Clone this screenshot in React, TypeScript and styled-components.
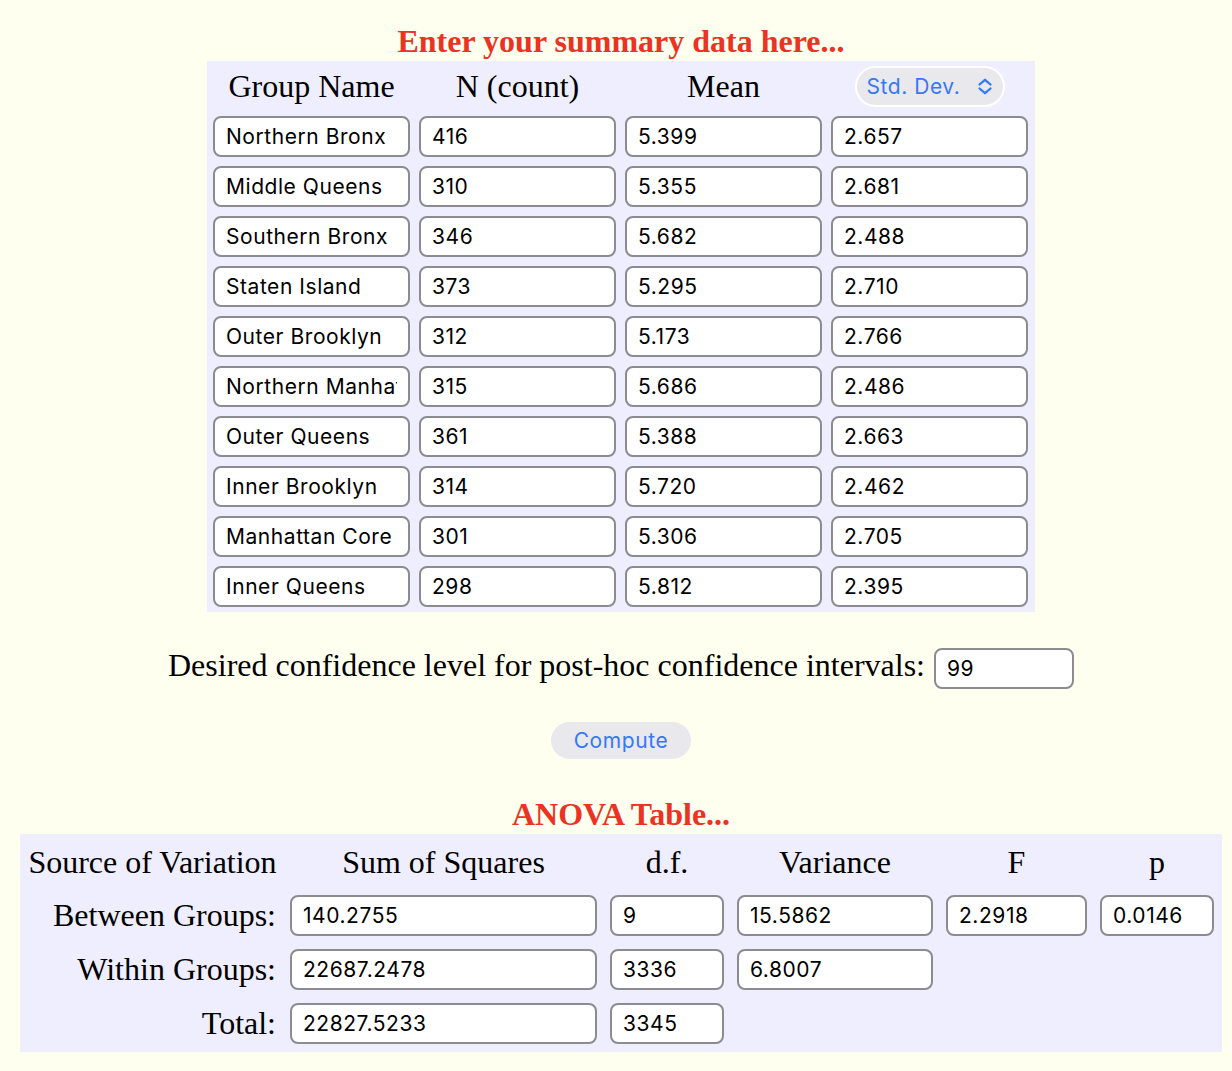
import { FC } from "react";
import styled, { createGlobalStyle } from "styled-components";

const GlobalStyle = createGlobalStyle`
	html, body {
		margin: 0;
		padding: 0;
		background: #fffff0;
	}
	body {
		font-family: "Liberation Serif", "Times New Roman", serif;
		color: #000;
	}
`;

const Page = styled("div")`
	padding: 0 10px 20px 20px;
`;

const SectionTitle = styled("div")`
	margin: ${(p: { $top: number }) => p.$top}px 0 2px;
	line-height: 36px;
	font-size: 32px;
	font-weight: bold;
	color: #ea3323;
	text-align: center;
`;

const SummaryGrid = styled("div")`
	width: 828px;
	box-sizing: border-box;
	margin: 0 auto;
	display: grid;
	grid-template-columns: repeat(4, 197px);
	grid-auto-rows: 41px;
	gap: 9px;
	padding: 5px 7px 5px 6px;
	background: #eeeeff;
`;

const HeadCell = styled("div")`
	display: flex;
	align-items: center;
	justify-content: center;
	font-size: 32px;
	white-space: nowrap;
`;

const Field = styled("input")`
	box-sizing: border-box;
	width: 100%;
	height: 41px;
	margin: 0;
	padding: 0 11px;
	border: 2px solid #8b8b90;
	border-radius: 8px;
	background: #fff;
	font-family: "Inter", "Liberation Sans", sans-serif;
	font-size: 21px;
	letter-spacing: 0.55px;
	color: #000;
	outline: none;
`;

const SelectPill = styled("div")`
	box-sizing: border-box;
	width: 150px;
	height: 41px;
	display: flex;
	align-items: center;
	justify-content: space-between;
	padding: 0 10px 0 10px;
	border: 2px solid #fff;
	border-radius: 21px;
	background: #e9e9ed;
	color: #3478f6;
	font-family: "Inter", "Liberation Sans", sans-serif;
	font-size: 21px;
	letter-spacing: 0.55px;
	cursor: pointer;
`;

const ConfidenceRow = styled("div")`
	margin-top: 35px;
	display: flex;
	align-items: baseline;
	justify-content: center;
	gap: 9px;
	font-size: 32px;
	line-height: 36px;
`;

const ConfidenceField = styled(Field)`
	width: 140px;
`;

const ComputeButton = styled("button")`
	display: block;
	margin: 33px auto 0;
	width: 140px;
	height: 37px;
	border: none;
	border-radius: 19px;
	background: #e9e9ed;
	color: #3478f6;
	font-family: "Inter", "Liberation Sans", sans-serif;
	font-size: 21px;
	letter-spacing: 0.6px;
	cursor: pointer;
`;

const AnovaGrid = styled("div")`
	display: grid;
	grid-template-columns: 249px 307px 114px 196px 141px 114px;
	grid-template-rows: 40px repeat(3, 41px);
	gap: 13px;
	padding: 8px;
	background: #eeeeff;
`;

const RowLabel = styled("div")`
	display: flex;
	align-items: center;
	justify-content: flex-end;
	font-size: 32px;
	white-space: nowrap;
	padding-right: 1px;
`;

const Blank = styled("div")``;

const Chevrons: FC = () => (
	<svg width="16" height="17" viewBox="0 0 16 17" fill="none">
		<path
			d="M2.5 6.5 L8 1.8 L13.5 6.5 M2.5 10.5 L8 15.2 L13.5 10.5"
			stroke="currentColor"
			strokeWidth="2.3"
			strokeLinecap="round"
			strokeLinejoin="round"
		/>
	</svg>
);

interface IGroup {
	name: string;
	n: string;
	mean: string;
	sd: string;
}

const groups: IGroup[] = [
	{ name: "Northern Bronx", n: "416", mean: "5.399", sd: "2.657" },
	{ name: "Middle Queens", n: "310", mean: "5.355", sd: "2.681" },
	{ name: "Southern Bronx", n: "346", mean: "5.682", sd: "2.488" },
	{ name: "Staten Island", n: "373", mean: "5.295", sd: "2.710" },
	{ name: "Outer Brooklyn", n: "312", mean: "5.173", sd: "2.766" },
	{ name: "Northern Manhattan", n: "315", mean: "5.686", sd: "2.486" },
	{ name: "Outer Queens", n: "361", mean: "5.388", sd: "2.663" },
	{ name: "Inner Brooklyn", n: "314", mean: "5.720", sd: "2.462" },
	{ name: "Manhattan Core", n: "301", mean: "5.306", sd: "2.705" },
	{ name: "Inner Queens", n: "298", mean: "5.812", sd: "2.395" }
];

const anovaRows: { label: string; values: string[] }[] = [
	{
		label: "Between Groups:",
		values: ["140.2755", "9", "15.5862", "2.2918", "0.0146"]
	},
	{ label: "Within Groups:", values: ["22687.2478", "3336", "6.8007"] },
	{ label: "Total:", values: ["22827.5233", "3345"] }
];

const anovaHeads = [
	"Source of Variation",
	"Sum of Squares",
	"d.f.",
	"Variance",
	"F",
	"p"
];

const App: FC = () => {
	return (
		<>
			<GlobalStyle />
			<Page>
				<SectionTitle $top={23}>Enter your summary data here...</SectionTitle>
				<SummaryGrid>
					<HeadCell>Group Name</HeadCell>
					<HeadCell>N (count)</HeadCell>
					<HeadCell>Mean</HeadCell>
					<HeadCell>
						<SelectPill>
							<span>Std. Dev.</span>
							<Chevrons />
						</SelectPill>
					</HeadCell>
					{groups.map((g) => (
						<>
							<Field key={g.name + "-name"} readOnly defaultValue={g.name} />
							<Field key={g.name + "-n"} readOnly defaultValue={g.n} />
							<Field key={g.name + "-mean"} readOnly defaultValue={g.mean} />
							<Field key={g.name + "-sd"} readOnly defaultValue={g.sd} />
						</>
					))}
				</SummaryGrid>

				<ConfidenceRow>
					<span>Desired confidence level for post-hoc confidence intervals:</span>
					<ConfidenceField readOnly defaultValue="99" />
				</ConfidenceRow>

				<ComputeButton>Compute</ComputeButton>

				<SectionTitle $top={37}>ANOVA Table...</SectionTitle>
				<AnovaGrid>
					{anovaHeads.map((h) => (
						<HeadCell key={h}>{h}</HeadCell>
					))}
					{anovaRows.map((row) => (
						<>
							<RowLabel key={row.label}>{row.label}</RowLabel>
							{[0, 1, 2, 3, 4].map((i) =>
								row.values[i] !== undefined ? (
									<Field
										key={row.label + i}
										readOnly
										defaultValue={row.values[i]}
									/>
								) : (
									<Blank key={row.label + i} />
								)
							)}
						</>
					))}
				</AnovaGrid>
			</Page>
		</>
	);
};

export default App;
